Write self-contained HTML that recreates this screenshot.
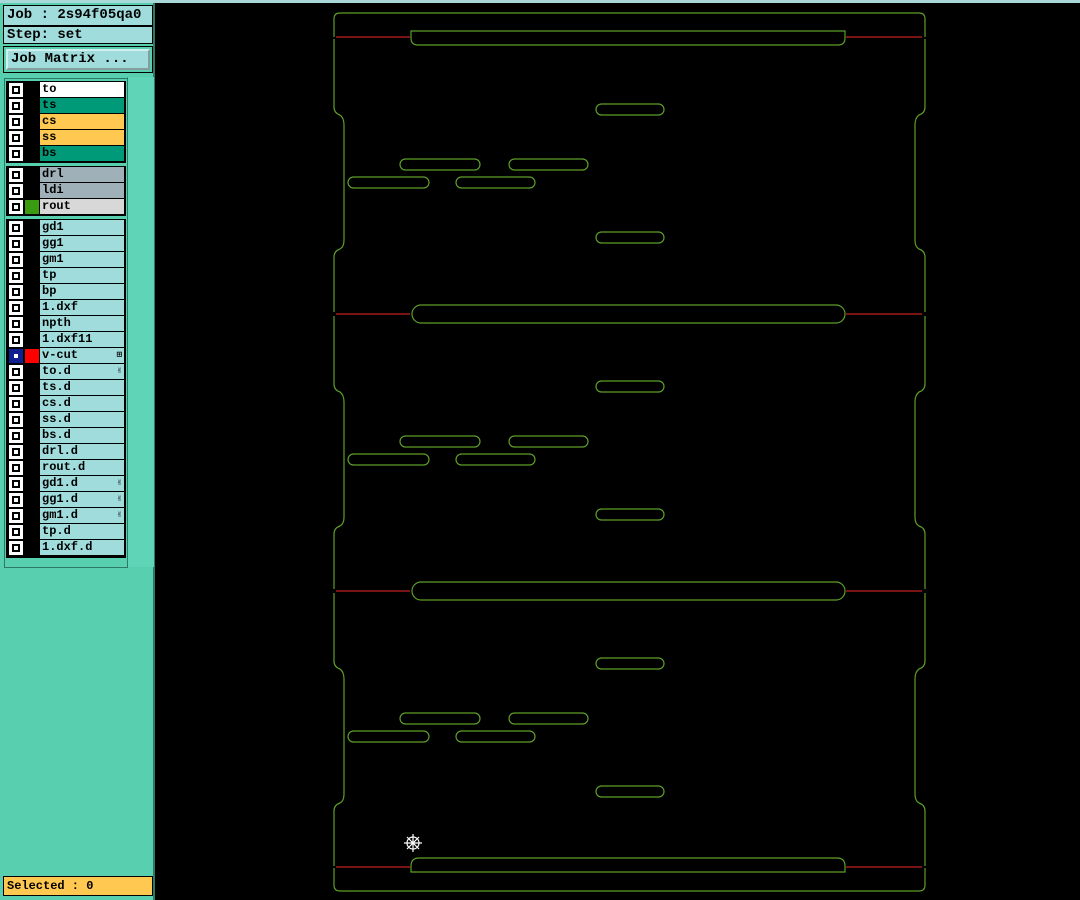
<!DOCTYPE html>
<html><head><style>
*{margin:0;padding:0;box-sizing:border-box}
body{width:1080px;height:900px;background:#000;position:relative;overflow:hidden;font-family:"Liberation Mono",monospace}
.a{position:absolute}
.hdr{background:#a0dcdc;border:1px solid #000;font-size:14px;font-weight:bold;line-height:18px;padding-left:3px;color:#000}
.row{position:absolute;left:7px;width:117px;height:16px}
.cb{position:absolute;left:2px;top:1px;width:14px;height:14px;background:#fff}
.cb i{position:absolute;left:3px;top:3px;width:8px;height:8px;border:2px solid #000;background:#fff}
.sw{position:absolute;left:17px;top:0;width:16px;height:16px;background:#000}
.nm{position:absolute;left:33px;top:0;width:84px;height:15px;font-size:12px;font-weight:bold;line-height:15px;padding-left:2px;color:#000}
.ic{position:absolute;right:2px;top:0;font-size:9px}
</style></head><body>
<div class="a" style="left:0;top:0;width:1080px;height:3px;background:#a8d8d8"></div>
<div class="a" style="left:0;top:3px;width:155px;height:897px;background:#58d0b0;border-right:2px solid #2a7a66"></div>
<div class="a hdr" style="left:3px;top:5px;width:150px;height:21px">Job : 2s94f05qa0</div>
<div class="a hdr" style="left:3px;top:26px;width:150px;height:18px;line-height:16px">Step: set</div>
<div class="a" style="left:3px;top:46px;width:150px;height:27px;border:1px solid #000;background:#58d0b0"></div>
<div class="a hdr" style="left:6px;top:49px;width:144px;height:21px;border:2px outset #d0f0f0;font-size:14px;line-height:16px;padding-left:3px">Job Matrix ...</div>
<div class="a" style="left:127px;top:77px;width:27px;height:490px;background:#60d4b6;border-left:1px solid #3a8"></div>
<div class="a" style="left:4px;top:78px;width:124px;height:490px;background:#58d0b0;border:1px solid #2a7a66"></div>
<div class="a" style="left:6px;top:81px;width:120px;height:82px;background:#000"></div>
<div class="a" style="left:6px;top:166px;width:120px;height:50px;background:#000"></div>
<div class="a" style="left:6px;top:219px;width:120px;height:339px;background:#000"></div>
<div id="rows"></div>
<div class="a" style="left:3px;top:876px;width:150px;height:20px;background:#ffc850;border:1px solid #000;font-size:12px;font-weight:bold;line-height:18px;padding-left:3px">Selected : 0</div>
<svg class="a" style="left:0;top:0" width="1080" height="900">
<g fill="none" stroke="#5e9e28" stroke-width="1.2">
<path d="M334,37 L334,19 Q334,13 340,13 L919,13 Q925,13 925,19 L925,37"/>
<path d="M334,868 L334,885 Q334,891 340,891 L919,891 Q925,891 925,885 L925,868"/>
<path d="M411,31 L845,31 L845,38 Q845,45 838,45 L418,45 Q411,45 411,38 Z"/>
<path d="M411,872 L845,872 L845,866 Q845,858 837,858 L419,858 Q411,858 411,866 Z"/>
<rect x="412" y="305" width="433" height="18" rx="9"/>
<rect x="412" y="582" width="433" height="18" rx="9"/>
<g id="panels"></g>
</g>
<g stroke="#c02020" stroke-width="1.2">
<path d="M336,37H410M846,37H922M336,314H410M846,314H922M336,591H410M846,591H922M336,867H410M846,867H922"/>
</g>
<g stroke="#fff" stroke-width="1.2" fill="none">
<circle cx="413" cy="843" r="6"/><path d="M413,834V852M404,843H422M407,837L419,849M419,837L407,849"/>
</g>
</svg>
<script>
var L=[["to","#fff",82],["ts","#009a78",98],["cs","#ffc850",114],["ss","#ffc850",130],["bs","#009a78",146],
["drl","#a0b0b8",167],["ldi","#a0b0b8",183],["rout","#d8d8d8",199]];
var g=["gd1","gg1","gm1","tp","bp","1.dxf","npth","1.dxf11","v-cut","to.d","ts.d","cs.d","ss.d","bs.d","drl.d","rout.d","gd1.d","gg1.d","gm1.d","tp.d","1.dxf.d"];
g.forEach(function(n,i){L.push([n,"#a0dcdc",220+i*16])});
var h="";L.forEach(function(r){var n=r[0];var sw=n=="rout"?"#3a9a10":n=="v-cut"?"#f00":"#000";
var ic=n=="v-cut"?"&#8862;":(["to.d","gd1.d","gg1.d","gm1.d"].indexOf(n)>=0?"&#9996;":"");
var cb=n=="v-cut"?' style="background:#102090"':'';
var ci=n=="v-cut"?' style="border-color:#102090;background:#fff"':'';
h+='<div class="row" style="top:'+r[2]+'px"><div class="cb"'+cb+'><i'+ci+'></i></div><div class="sw"><div style="position:absolute;left:1px;top:1px;width:14px;height:14px;background:'+sw+'"></div></div><div class="nm" style="background:'+r[1]+'">'+n+'<span class="ic">'+ic+'</span></div></div>';});
document.getElementById("rows").innerHTML=h;
var p="";[37,314,591].forEach(function(y){
p+='<path d="M334,'+(y+2)+' L334,'+(y+70)+' Q334,'+(y+76)+' 340,'+(y+78)+' Q344,'+(y+81)+' 344,'+(y+88)+' L344,'+(y+203)+' Q344,'+(y+210)+' 340,'+(y+212)+' Q334,'+(y+214)+' 334,'+(y+220)+' L334,'+(y+275)+'"/>';
p+='<path d="M925,'+(y+2)+' L925,'+(y+70)+' Q925,'+(y+76)+' 919,'+(y+78)+' Q915,'+(y+81)+' 915,'+(y+88)+' L915,'+(y+203)+' Q915,'+(y+210)+' 919,'+(y+212)+' Q925,'+(y+214)+' 925,'+(y+220)+' L925,'+(y+275)+'"/>';
[[596,67,68],[596,195,68],[400,122,80],[509,122,79],[348,140,81],[456,140,79]].forEach(function(s){
p+='<rect x="'+s[0]+'" y="'+(y+s[1])+'" width="'+s[2]+'" height="11" rx="5.5"/>';});});
document.getElementById("panels").innerHTML=p;
</script>
</body></html>
